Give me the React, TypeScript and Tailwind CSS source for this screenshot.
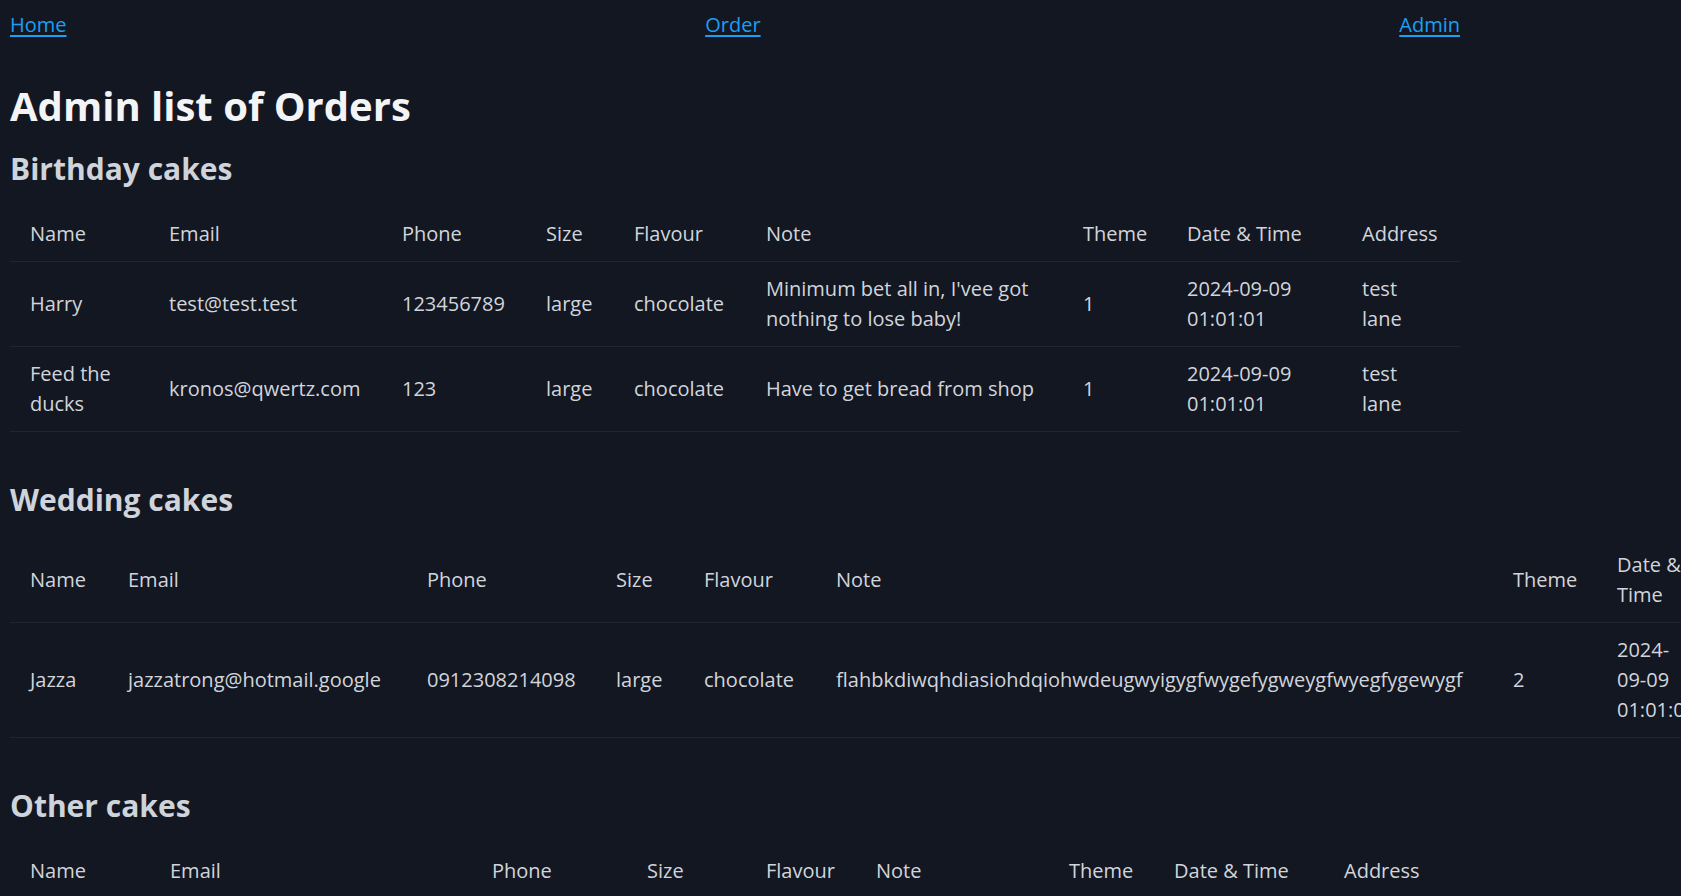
import React from 'react'

type Order = {
  name: string
  email: string
  phone: string
  size: string
  flavour: string
  note: string
  theme: string
  date: string
  address: string
}

const birthday: Order[] = [
  {
    name: 'Harry',
    email: 'test@test.test',
    phone: '123456789',
    size: 'large',
    flavour: 'chocolate',
    note: "Minimum bet all in, I'vee got nothing to lose baby!",
    theme: '1',
    date: '2024-09-09 01:01:01',
    address: 'test lane',
  },
  {
    name: 'Feed the ducks',
    email: 'kronos@qwertz.com',
    phone: '123',
    size: 'large',
    flavour: 'chocolate',
    note: 'Have to get bread from shop',
    theme: '1',
    date: '2024-09-09 01:01:01',
    address: 'test lane',
  },
]

const wedding: Order[] = [
  {
    name: 'Jazza',
    email: 'jazzatrong@hotmail.google',
    phone: '0912308214098',
    size: 'large',
    flavour: 'chocolate',
    note: 'flahbkdiwqhdiasiohdqiohwdeugwyigygfwygefygweygfwyegfygewygf',
    theme: '2',
    date: '2024-09-09 01:01:01',
    address: 'test lane',
  },
]

const headers = ['Name', 'Email', 'Phone', 'Size', 'Flavour', 'Note', 'Theme', 'Date & Time', 'Address']

function OrderTable({ rows, cols, width }: { rows: Order[]; cols: string[]; width: string }) {
  return (
    <table className={`table-fixed border-collapse mt-[20px] ${width}`}>
      <colgroup>
        {cols.map((c, i) => (
          <col key={i} className={c} />
        ))}
      </colgroup>
      <thead>
        <tr className="border-b border-[#1f2633]">
          {headers.map((h) => (
            <th key={h} className="px-5 py-3 text-left font-normal align-middle">
              {h}
            </th>
          ))}
        </tr>
      </thead>
      <tbody>
        {rows.map((r, i) => (
          <tr key={i} className="border-b border-[#1f2633]">
            <td className="px-5 py-3">{r.name}</td>
            <td className="px-5 py-3">{r.email}</td>
            <td className="px-5 py-3">{r.phone}</td>
            <td className="px-5 py-3">{r.size}</td>
            <td className="px-5 py-3">{r.flavour}</td>
            <td className="px-5 py-3">{r.note}</td>
            <td className="px-5 py-3">{r.theme}</td>
            <td className="px-5 py-3">{r.date}</td>
            <td className="px-5 py-3">{r.address}</td>
          </tr>
        ))}
      </tbody>
    </table>
  )
}

export default function App() {
  return (
    <div className="h-screen w-full overflow-hidden bg-[#131722] font-['Open_Sans','Noto_Sans',sans-serif] text-[20px] leading-[30px] text-[#d1d5db]">
      <div className="w-[1450px] ml-[10px] pt-[10px]">
        <nav className="flex justify-between">
          <a href="#" className="text-[#1a9ff5] underline underline-offset-[3px]">Home</a>
          <a href="#" className="text-[#1a9ff5] underline underline-offset-[3px]">Order</a>
          <a href="#" className="text-[#1a9ff5] underline underline-offset-[3px]">Admin</a>
        </nav>

        <h1 className="mt-[42px] text-[40px] leading-[48px] font-bold text-[#f3f4f6]">Admin list of Orders</h1>

        <h2 className="mt-[21px] text-[30px] leading-[36px] font-bold text-[#cfd3da]">Birthday cakes</h2>
        <OrderTable
          rows={birthday}
          width="w-[1450px]"
          cols={['w-[139px]', 'w-[233px]', 'w-[144px]', 'w-[88px]', 'w-[132px]', 'w-[317px]', 'w-[104px]', 'w-[175px]', 'w-[118px]']}
        />

        <h2 className="mt-[50px] text-[30px] leading-[36px] font-bold text-[#cfd3da]">Wedding cakes</h2>
        <OrderTable
          rows={wedding}
          width="w-[1832px]"
          cols={['w-[98px]', 'w-[299px]', 'w-[189px]', 'w-[88px]', 'w-[132px]', 'w-[677px]', 'w-[104px]', 'w-[120px]', 'w-[125px]']}
        />

        <h2 className="mt-[50px] text-[30px] leading-[36px] font-bold text-[#cfd3da]">Other cakes</h2>
        <OrderTable
          rows={[]}
          width="w-[1450px]"
          cols={['w-[140px]', 'w-[322px]', 'w-[155px]', 'w-[119px]', 'w-[110px]', 'w-[193px]', 'w-[105px]', 'w-[170px]', 'w-[136px]']}
        />
      </div>
    </div>
  )
}
